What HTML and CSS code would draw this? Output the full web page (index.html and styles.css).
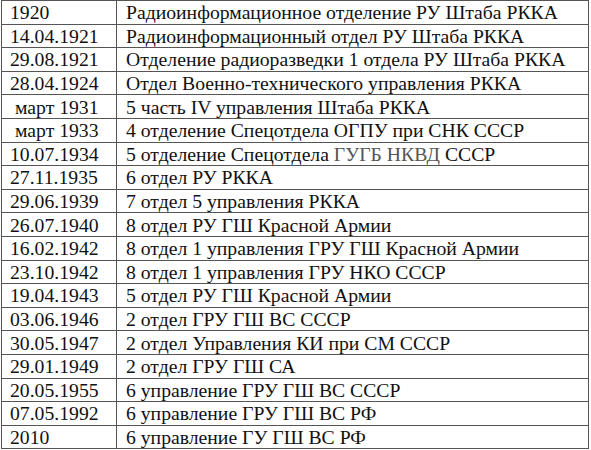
FILE: index.html
```html
<!DOCTYPE html>
<html>
<head>
<meta charset="utf-8">
<link rel="stylesheet" href="styles.css">
</head>
<body>
<table class="history">
<tr><td class="date">1920</td><td>Радиоинформационное отделение РУ Штаба РККА</td></tr>
<tr><td class="date">14.04.1921</td><td>Радиоинформационный отдел РУ Штаба РККА</td></tr>
<tr><td class="date">29.08.1921</td><td>Отделение радиоразведки 1 отдела РУ Штаба РККА</td></tr>
<tr><td class="date">28.04.1924</td><td>Отдел Военно-технического управления РККА</td></tr>
<tr><td class="date indent">март 1931</td><td>5 часть IV управления Штаба РККА</td></tr>
<tr><td class="date indent">март 1933</td><td>4 отделение Спецотдела ОГПУ при СНК СССР</td></tr>
<tr><td class="date">10.07.1934</td><td>5 отделение Спецотдела <span class="link">ГУГБ НКВД</span> СССР</td></tr>
<tr><td class="date">27.11.1935</td><td>6 отдел РУ РККА</td></tr>
<tr><td class="date">29.06.1939</td><td>7 отдел 5 управления РККА</td></tr>
<tr><td class="date">26.07.1940</td><td>8 отдел РУ ГШ Красной Армии</td></tr>
<tr><td class="date">16.02.1942</td><td>8 отдел 1 управления ГРУ ГШ Красной Армии</td></tr>
<tr><td class="date">23.10.1942</td><td>8 отдел 1 управления ГРУ НКО СССР</td></tr>
<tr><td class="date">19.04.1943</td><td>5 отдел РУ ГШ Красной Армии</td></tr>
<tr><td class="date">03.06.1946</td><td>2 отдел ГРУ ГШ ВС СССР</td></tr>
<tr><td class="date">30.05.1947</td><td>2 отдел Управления КИ при СМ СССР</td></tr>
<tr><td class="date">29.01.1949</td><td>2 отдел ГРУ ГШ СА</td></tr>
<tr><td class="date">20.05.1955</td><td>6 управление ГРУ ГШ ВС СССР</td></tr>
<tr><td class="date">07.05.1992</td><td>6 управление ГРУ ГШ ВС РФ</td></tr>
<tr><td class="date">2010</td><td>6 управление ГУ ГШ ВС РФ</td></tr>
</table>
</body>
</html>
```
FILE: styles.css
```css
html, body {
  margin: 0;
  padding: 0;
  background: #fff;
}
body {
  padding: 0 0 0 1px;
}
.history {
  border-collapse: collapse;
  width: 588px;
  font-family: "Liberation Serif", "Times New Roman", serif;
  font-size: 19.7px;
  color: #111;
}
.history td {
  border: 1.5px solid #555;
  height: 22.6px;
  padding: 0 0 0 9px;
  line-height: 20px;
  vertical-align: middle;
  white-space: nowrap;
}
.history td.date {
  width: 101px;
  padding-left: 8px;
}
.history td.indent {
  padding-left: 13px;
}
.link {
  color: #555;
}
```
